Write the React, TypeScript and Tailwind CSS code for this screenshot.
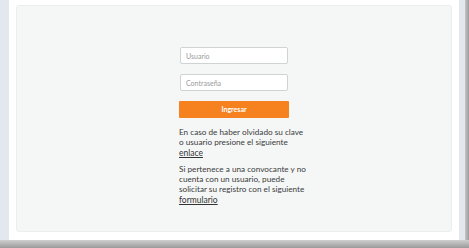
export default function App() {
  return (
    <div className="w-[469px] h-[248px] flex flex-col bg-white overflow-hidden" style={{ fontFamily: 'Lato, "Liberation Sans", sans-serif' }}>
      <div className="flex flex-1 min-h-0">
        <div className="w-[9px] bg-[#e3e7ee]" />
        <div className="flex-1 flex bg-white pt-[5px] pb-[8px] px-[7px]">
          <div className="flex-1 flex justify-center rounded-[3px] border border-[#eceeee] bg-[#f5f7f7] pt-[41px]">
            <div className="w-[110px] flex flex-col">
              <input
                placeholder="Usuario"
                className="mx-[1px] h-[17px] rounded-[2px] border border-[#cfd3d3] bg-white px-[5px] text-[7px] text-[#555] placeholder-[#9a9a9a] outline-none"
              />
              <input
                placeholder="Contraseña"
                className="mx-[1px] mt-[10px] h-[17px] rounded-[2px] border border-[#cfd3d3] bg-white px-[5px] text-[7px] text-[#555] placeholder-[#9a9a9a] outline-none"
              />
              <button className="mt-[10px] h-[17px] rounded-[1px] bg-[#f5821f] text-[7px] font-bold text-white">
                Ingresar
              </button>
              <p className="mt-[9px] whitespace-nowrap text-[8.2px] leading-[10px] text-[#3a3a3a]">
                En caso de haber olvidado su clave
                <br />o usuario presione el siguiente
              </p>
              <a className="text-[8.5px] leading-[12px] text-[#333] underline">enlace</a>
              <p className="mt-[5px] whitespace-nowrap text-[8.2px] leading-[10px] text-[#3a3a3a]">
                Si pertenece a una convocante y no
                <br />cuenta con un usuario, puede
                <br />solicitar su registro con el siguiente
              </p>
              <a className="text-[8.5px] leading-[12px] text-[#333] underline">formulario</a>
            </div>
          </div>
        </div>
        <div className="w-[6px] bg-[#e3e7ee]" />
        <div className="w-[4px] bg-gradient-to-r from-[#c4c4c4] to-[#9c9c9c]" />
      </div>
      <div className="h-[8px] bg-gradient-to-b from-[#cfcfcf] to-[#9a9a9a]" />
    </div>
  );
}
